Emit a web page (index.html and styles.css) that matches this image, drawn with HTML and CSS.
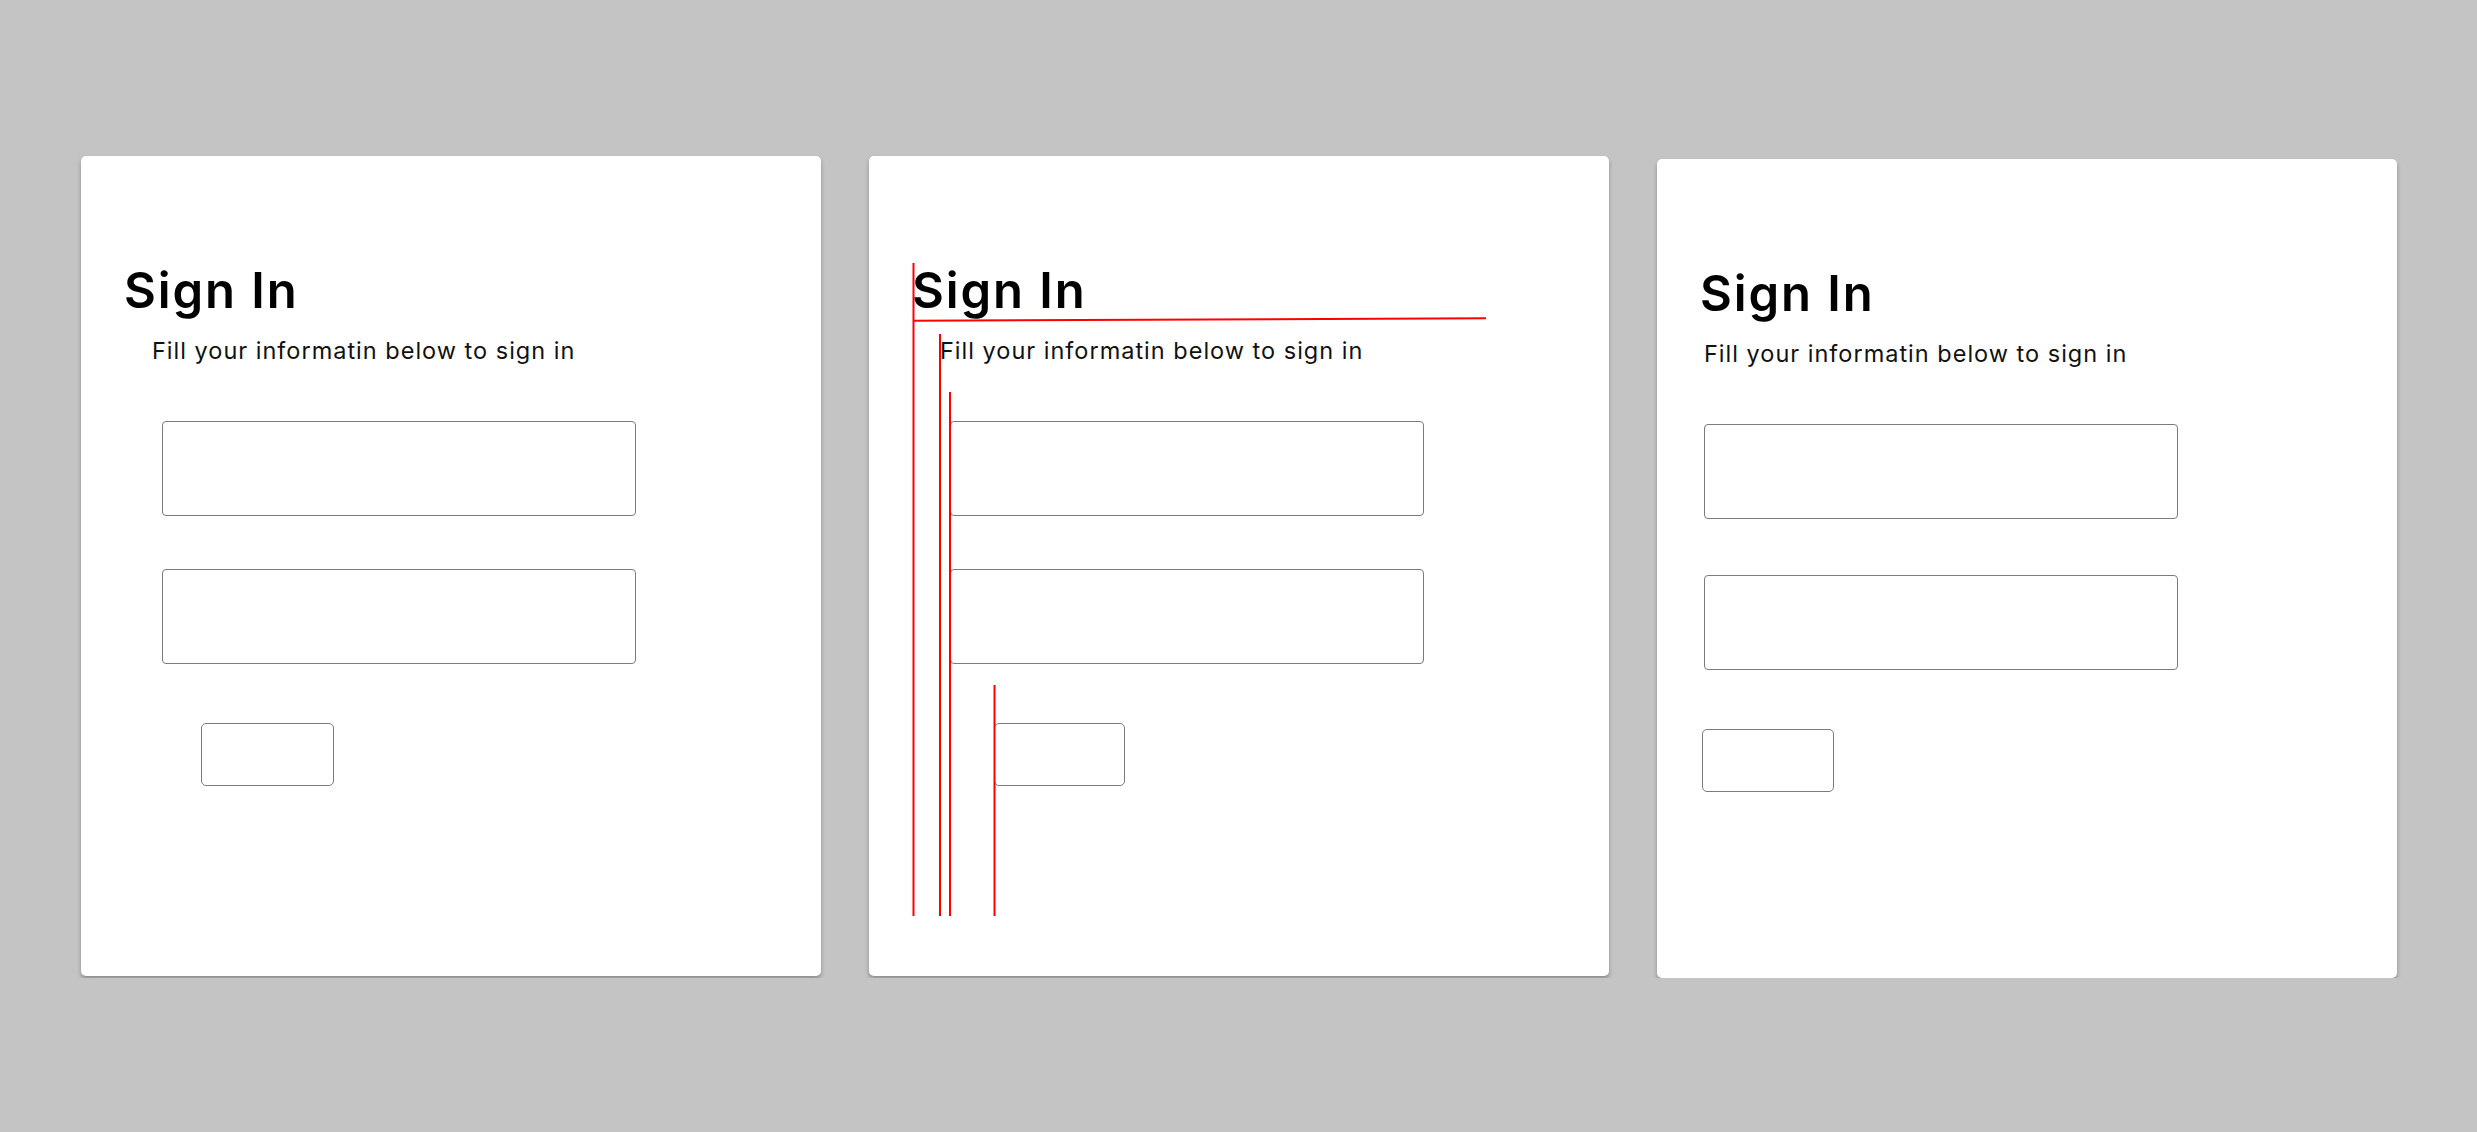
FILE: index.html
```html
<!DOCTYPE html>
<html lang="en">
<head>
    <meta charset="UTF-8">
    <meta name="viewport" content="width=device-width, initial-scale=1.0">
    <title>Sign In</title>
    <link rel="stylesheet" href="styles.css">
</head>
<body>
    <div class="board">
        <!-- Variant 1 -->
        <div class="card">
            <h1 class="card-title">Sign In</h1>
            <p class="card-sub">Fill your informatin below to sign in</p>
            <input class="field" type="text">
            <input class="field" type="password">
            <button class="submit"></button>
        </div>

        <!-- Variant 2, with the alignment guides -->
        <div class="card card-guides">
            <h1 class="card-title">Sign In</h1>
            <p class="card-sub">Fill your informatin below to sign in</p>
            <input class="field" type="text">
            <input class="field" type="password">
            <button class="submit"></button>
            <svg class="guides" width="740" height="820" viewBox="0 0 740 820">
                <line x1="44.5" y1="107" x2="44.5" y2="760" />
                <line x1="71" y1="178" x2="71" y2="760" />
                <line x1="81" y1="236" x2="81" y2="760" />
                <line x1="125.5" y1="529" x2="125.5" y2="760" />
                <line x1="44" y1="164.8" x2="617" y2="162.2" />
            </svg>
        </div>

        <!-- Variant 3, everything on one left edge -->
        <div class="card card-flush">
            <h1 class="card-title">Sign In</h1>
            <p class="card-sub">Fill your informatin below to sign in</p>
            <input class="field" type="text">
            <input class="field" type="password">
            <button class="submit"></button>
        </div>
    </div>
</body>
</html>
```

FILE: styles.css
```css
body {
    margin: 0;
    background: #c4c4c4;
    font-family: Inter, "Open Sans", sans-serif;
    color: #000;
}
.board {
    display: flex;
    align-items: flex-start;
    gap: 48px;
    padding: 156px 0 0 81px;
}
.card {
    position: relative;
    display: flex;
    flex-direction: column;
    align-items: flex-start;
    box-sizing: border-box;
    width: 740px;
    height: 820px;
    padding: 110px 0 0 46px;
    background: #fff;
    border-radius: 5px;
    box-shadow: 0 3px 4px rgba(0, 0, 0, 0.28);
}
.card-title {
    margin: 0 0 0 -3px;
    font-size: 49px;
    line-height: 49px;
    font-weight: 600;
    letter-spacing: 1.9px;
}
.card-sub {
    margin: 24px 0 0 25px;
    font-size: 23.5px;
    line-height: 23px;
    font-weight: 400;
    letter-spacing: 1px;
    color: #111;
}
.field {
    box-sizing: border-box;
    width: 474px;
    height: 95px;
    margin: 59px 0 0 35px;
    border: 1px solid #7b7b7b;
    border-radius: 4px;
    background: #fff;
}
.field + .field {
    margin-top: 53px;
}
.submit {
    box-sizing: border-box;
    width: 133px;
    height: 63px;
    margin: 59px 0 0 74px;
    border: 1px solid #7b7b7b;
    border-radius: 5px;
    background: #fff;
}
.card-guides .submit {
    width: 131px;
    margin-left: 79px;
}
.guides {
    position: absolute;
    top: 0;
    left: 0;
    pointer-events: none;
}
.guides line {
    stroke: #ff0000;
    stroke-width: 2;
}
.card-flush {
    height: 819px;
    margin-top: 3px;
}
.card-flush .card-sub {
    margin-left: 1px;
}
.card-flush .field {
    margin-left: 1px;
}
.card-flush .field + .field {
    margin-top: 56px;
}
.card-flush .submit {
    width: 132px;
    margin-left: -1px;
}
```
